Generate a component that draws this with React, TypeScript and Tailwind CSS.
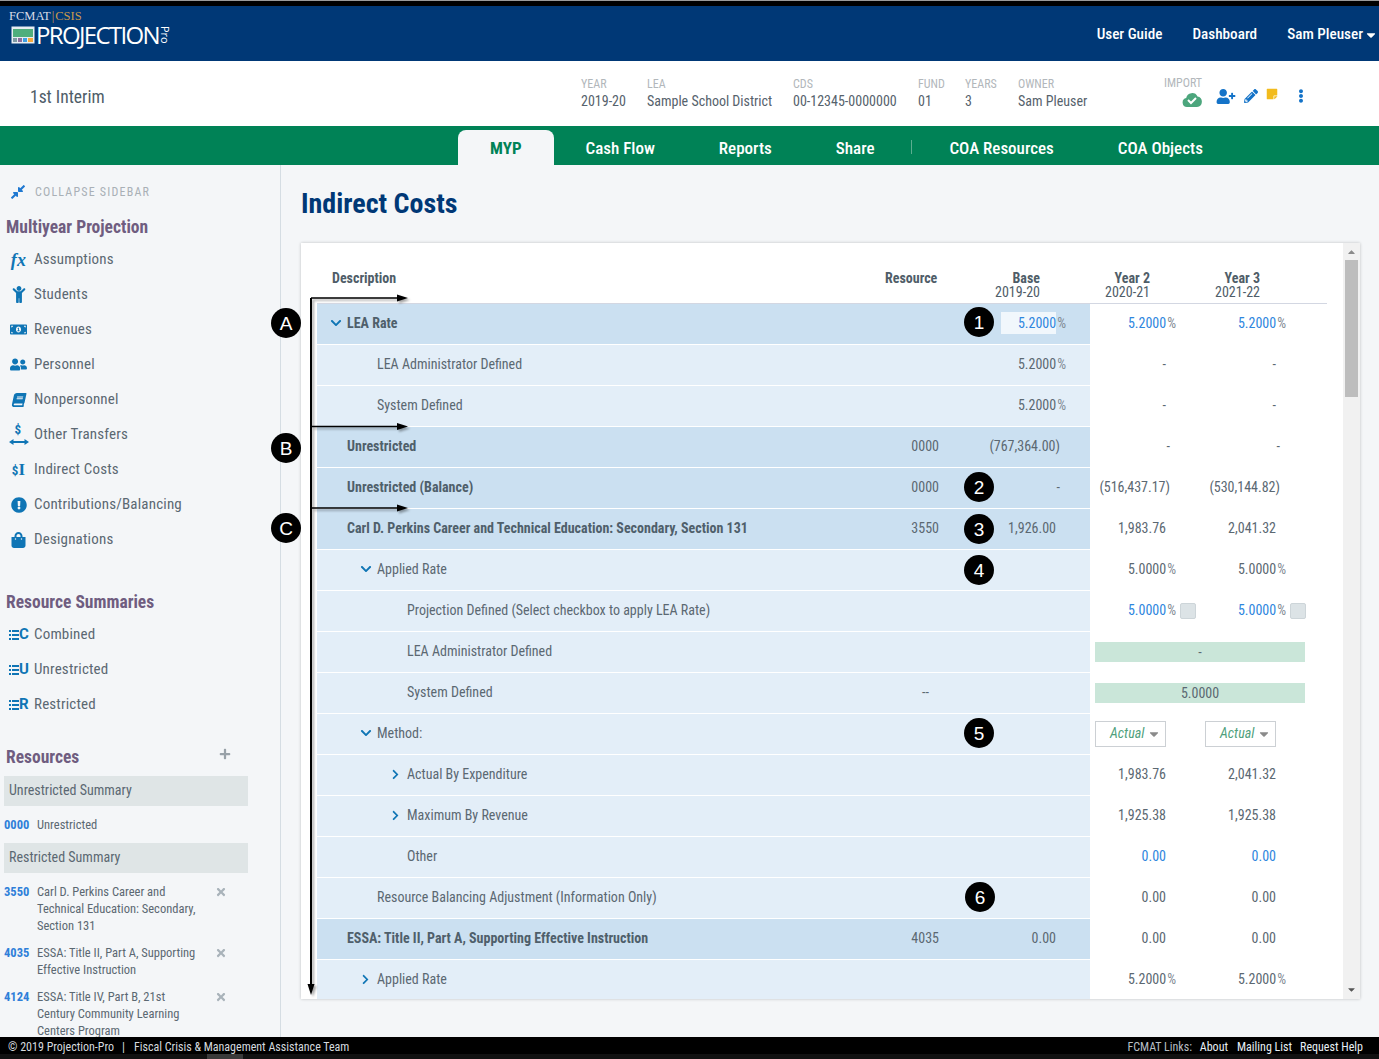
import type { ReactNode } from 'react';
import {
  FaBook, FaCaretDown, FaChevronDown, FaChevronRight, FaChild, FaCompressAlt, FaEllipsisV,
  FaExclamationCircle, FaMoneyBillAlt, FaPencilAlt, FaPlus, FaShoppingBag,
  FaStickyNote, FaTimes, FaUserFriends, FaUserPlus,
} from 'react-icons/fa';

const blue = 'text-[#0f75b5]';

function TransferIcon() {
  return (
    <span className={`relative block w-[20px] h-[20px] ${blue}`}>
      <span className="absolute left-[6px] -top-[3px] text-[13px] font-bold leading-[16px]">$</span>
      <svg viewBox="0 0 20 6" className="absolute left-0 bottom-0 w-[20px] h-[6px]" fill="currentColor">
        <path d="M0 3 4.500 0v2h11V0L20 3l-4.500 3V4h-11v2z" />
      </svg>
    </span>
  );
}

function SummaryIcon({ letter }: { letter: string }) {
  return (
    <span className={`flex items-center ${blue}`}>
      <svg viewBox="0 0 10 10" className="w-[10px] h-[10px]" fill="currentColor">
        <path d="M0 0h2v2H0zM3 0h7v2H3zM0 4h2v2H0zM3 4h7v2H3zM0 8h2v2H0zM3 8h7v2H3z" />
      </svg>
      <span className="text-[15px] [font-stretch:100%] font-bold leading-none">{letter}</span>
    </span>
  );
}

const navItems: { label: string; icon: ReactNode }[] = [
  { label: 'Assumptions', icon: <span className={`font-['Liberation_Serif',serif] italic font-bold text-[18px] leading-none ${blue}`}>fx</span> },
  { label: 'Students', icon: <FaChild className={`w-[16px] h-[17px] ${blue}`} /> },
  { label: 'Revenues', icon: <FaMoneyBillAlt className={`w-[17px] h-[15px] ${blue}`} /> },
  { label: 'Personnel', icon: <FaUserFriends className={`w-[17px] h-[15px] ${blue}`} /> },
  { label: 'Nonpersonnel', icon: <FaBook className={`w-[14px] h-[14px] -skew-x-12 ${blue}`} /> },
  { label: 'Other Transfers', icon: <TransferIcon /> },
  { label: 'Indirect Costs', icon: <span className={`font-bold text-[13px] leading-none ${blue}`}>$<span className="font-['Liberation_Serif',serif] text-[17px] font-bold">I</span></span> },
  { label: 'Contributions/Balancing', icon: <FaExclamationCircle className={`w-[16px] h-[16px] ${blue}`} /> },
  { label: 'Designations', icon: <FaShoppingBag className={`w-[17px] h-[16px] ${blue}`} /> },
];

const summaries = [
  { label: 'Combined', letter: 'C' },
  { label: 'Unrestricted', letter: 'U' },
  { label: 'Restricted', letter: 'R' },
];

const restricted = [
  { code: '3550', text: ['Carl D. Perkins Career and', 'Technical Education: Secondary,', 'Section 131'] },
  { code: '4035', text: ['ESSA: Title II, Part A, Supporting', 'Effective Instruction'] },
  { code: '4124', text: ['ESSA: Title IV, Part B, 21st', 'Century Community Learning', 'Centers Program'] },
];

const metaFields = [
  { label: 'YEAR', value: '2019-20', w: 'w-[66px]' },
  { label: 'LEA', value: 'Sample School District', w: 'w-[146px]' },
  { label: 'CDS', value: '00-12345-0000000', w: 'w-[125px]' },
  { label: 'FUND', value: '01', w: 'w-[47px]' },
  { label: 'YEARS', value: '3', w: 'w-[53px]' },
  { label: 'OWNER', value: 'Sam Pleuser', w: 'w-[146px]' },
];

function Pct({ v, blueText }: { v: string; blueText?: boolean }) {
  return (
    <span className="whitespace-nowrap">
      <span className={blueText ? 'text-[#2e86de]' : ''}>{v}</span>
      <span className="ml-[1px] text-[#7f8a93]">%</span>
    </span>
  );
}

function YearCell({ v, blueText, tight, check }: { v?: string; blueText?: boolean; tight?: boolean; check?: boolean }) {
  if (!v) return <div className="w-[110px]" />;
  if (check) {
    return (
      <div className="w-[110px] flex items-center justify-end pr-[4px]">
        <Pct v={v.replace('%', '')} blueText={blueText} />
        <span className="ml-[4px] w-[16px] h-[16px] rounded-[2px] bg-[#dce3e6] border border-[#cdd5d9]" />
      </div>
    );
  }
  if (v.endsWith('%')) {
    return <div className="w-[110px] text-right pr-[24px]"><Pct v={v.slice(0, -1)} blueText={blueText} /></div>;
  }
  const pad = v.startsWith('(') || tight ? 'pr-[30px]' : 'pr-[34px]';
  return <div className={`w-[110px] text-right ${pad} ${blueText ? 'text-[#2e86de]' : ''}`}>{v}</div>;
}

function ActualSelect() {
  return (
    <div className="w-[110px] pl-[5px]">
      <div className="w-[71px] h-[26px] border border-[#ccd0d4] flex items-center pl-[14px] text-[#4f9f7c] italic">
        Actual
        <FaCaretDown className="ml-[3px] w-[14px] h-[14px] text-[#8b8b8b]" />
      </div>
    </div>
  );
}

type Row = {
  label: string;
  level: number;
  strong?: boolean;
  chevron?: 'down' | 'right';
  res?: string;
  resPad?: boolean;
  base?: string;
  baseInput?: boolean;
  y2?: string;
  y3?: string;
  yBlue?: boolean;
  dashTight?: boolean;
  check?: boolean;
  bar?: string;
  select?: boolean;
};

const rows: Row[] = [
  { label: 'LEA Rate', level: 0, strong: true, chevron: 'down', baseInput: true, base: '5.2000', y2: '5.2000%', y3: '5.2000%', yBlue: true },
  { label: 'LEA Administrator Defined', level: 1, base: '5.2000%', y2: '-', y3: '-' },
  { label: 'System Defined', level: 1, base: '5.2000%', y2: '-', y3: '-' },
  { label: 'Unrestricted', level: 0, strong: true, res: '0000', base: '(767,364.00)', y2: '-', y3: '-', dashTight: true },
  { label: 'Unrestricted (Balance)', level: 0, strong: true, res: '0000', base: '-', y2: '(516,437.17)', y3: '(530,144.82)' },
  { label: 'Carl D. Perkins Career and Technical Education: Secondary, Section 131', level: 0, strong: true, res: '3550', base: '1,926.00', y2: '1,983.76', y3: '2,041.32' },
  { label: 'Applied Rate', level: 1, chevron: 'down', y2: '5.0000%', y3: '5.0000%' },
  { label: 'Projection Defined (Select checkbox to apply LEA Rate)', level: 2, y2: '5.0000%', y3: '5.0000%', yBlue: true, check: true },
  { label: 'LEA Administrator Defined', level: 2, bar: '-' },
  { label: 'System Defined', level: 2, res: '--', resPad: true, bar: '5.0000' },
  { label: 'Method:', level: 1, chevron: 'down', select: true },
  { label: 'Actual By Expenditure', level: 2, chevron: 'right', y2: '1,983.76', y3: '2,041.32' },
  { label: 'Maximum By Revenue', level: 2, chevron: 'right', y2: '1,925.38', y3: '1,925.38' },
  { label: 'Other', level: 2, y2: '0.00', y3: '0.00', yBlue: true },
  { label: 'Resource Balancing Adjustment (Information Only)', level: 1, y2: '0.00', y3: '0.00' },
  { label: 'ESSA: Title II, Part A, Supporting Effective Instruction', level: 0, strong: true, res: '4035', base: '0.00', y2: '0.00', y3: '0.00' },
  { label: 'Applied Rate', level: 1, chevron: 'right', y2: '5.2000%', y3: '5.2000%' },
];

const levelPad = ['pl-[13px]', 'pl-[43px]', 'pl-[73px]'];

function BaseCell({ row }: { row: Row }) {
  if (row.baseInput) {
    return (
      <div className="w-[150px] flex justify-end items-center pr-[24px]">
        <span className="w-[55px] h-[22px] leading-[22px] bg-[#f1f7fc] text-right text-[#2e86de]">{row.base}</span>
        <span className="ml-[1px] text-[#7f8a93]">%</span>
      </div>
    );
  }
  if (!row.base) return <div className="w-[150px]" />;
  if (row.base.endsWith('%')) {
    return <div className="w-[150px] text-right pr-[24px]"><Pct v={row.base.slice(0, -1)} /></div>;
  }
  const pad = row.base.startsWith('(') || row.base === '-' ? 'pr-[30px]' : 'pr-[34px]';
  return <div className={`w-[150px] text-right ${pad}`}>{row.base}</div>;
}

function TableRow({ row }: { row: Row }) {
  return (
    <div className="flex h-[41px] items-stretch shrink-0">
      <div className={`w-[773px] flex items-center border-b border-white pb-[2px] ${row.strong ? 'bg-[#cbe0f1]' : 'bg-[#e3eef8]'} ${levelPad[row.level]}`}>
        <span className="w-[17px] shrink-0">
          {row.chevron === 'down' && <FaChevronDown className="w-[12px] h-[12px] text-[#0f75b5]" />}
          {row.chevron === 'right' && <FaChevronRight className="w-[11px] h-[11px] text-[#0f75b5]" />}
        </span>
        <span className={`flex-1 whitespace-nowrap ${row.strong ? 'font-bold text-[#4f5f6b]' : ''}`}>{row.label}</span>
        <span className={`w-[60px] text-right ${row.resPad ? 'pr-[11px]' : 'pr-[1px]'}`}>{row.res}</span>
        <BaseCell row={row} />
      </div>
      <div className="w-[237px] flex items-center pb-[2px]">
        {row.bar ? (
          <div className="ml-[5px] w-[210px] h-[20px] leading-[20px] bg-[#cae6d9] text-center">{row.bar}</div>
        ) : row.select ? (
          <>
            <ActualSelect />
            <ActualSelect />
          </>
        ) : (
          <>
            <YearCell v={row.y2} blueText={row.yBlue} tight={row.dashTight} check={row.check} />
            <YearCell v={row.y3} blueText={row.yBlue} tight={row.dashTight} check={row.check} />
          </>
        )}
      </div>
    </div>
  );
}

function Sidebar() {
  return (
    <aside className="w-[281px] shrink-0 border-r border-[#d5dde3] bg-[#f4f6f8] overflow-hidden">
      <div className="h-[52px] flex items-center pl-[10px] pt-[1px]">
        <FaCompressAlt className="w-[16px] h-[16px] text-[#1f78d1]" />
        <span className="ml-[9px] text-[12px] tracking-[1.2px] text-[#a9b0b6]">COLLAPSE SIDEBAR</span>
      </div>
      <h3 className="pl-[6px] text-[17.500px] leading-[20px] font-bold text-[#6f5d80]">Multiyear Projection</h3>
      <ul className="mt-[5px]">
        {navItems.map(item => (
          <li key={item.label} className="h-[35px] flex items-center text-[15px] tracking-[0.18px]">
            <span className="w-[34px] flex justify-center pl-[3px] shrink-0">{item.icon}</span>
            {item.label}
          </li>
        ))}
      </ul>
      <h3 className="mt-[35px] pl-[6px] text-[17.500px] leading-[20px] font-bold text-[#6f5d80]">Resource Summaries</h3>
      <ul className="mt-[5px]">
        {summaries.map(s => (
          <li key={s.label} className="h-[35px] flex items-center text-[15px] tracking-[0.18px]">
            <span className="w-[34px] pl-[9px] shrink-0"><SummaryIcon letter={s.letter} /></span>
            {s.label}
          </li>
        ))}
      </ul>
      <div className="mt-[25px] w-[248px] h-[20px] flex justify-between items-center">
        <h3 className="pl-[6px] text-[17.500px] leading-[20px] font-bold text-[#6f5d80]">Resources</h3>
        <FaPlus className="mr-[17px] -mt-[6px] w-[12px] h-[12px] text-[#98a1a8]" />
      </div>
      <div className="mt-[9px] ml-[4px] w-[244px] h-[30px] leading-[29px] pl-[5px] bg-[#dfe5e6] text-[14px]">Unrestricted Summary</div>
      <div className="h-[37px] pt-[1px] flex items-center pl-[4px] text-[12.500px]">
        <span className="w-[33px] font-bold text-[#2e7fd9]">0000</span>Unrestricted
      </div>
      <div className="ml-[4px] w-[244px] h-[30px] leading-[29px] pl-[5px] bg-[#dfe5e6] text-[14px]">Restricted Summary</div>
      <ul className="mt-[10px]">
        {restricted.map(r => (
          <li key={r.code} className="flex pl-[4px] pb-[10px] text-[12.500px] leading-[17px]">
            <span className="w-[33px] shrink-0 font-bold text-[#2e7fd9]">{r.code}</span>
            <span className="w-[178px] whitespace-nowrap">
              {r.text.map(t => <span key={t} className="block">{t}</span>)}
            </span>
            <FaTimes className="mt-[3px] w-[12px] h-[12px] text-[#a9b3ba]" />
          </li>
        ))}
      </ul>
    </aside>
  );
}

function Arrows() {
  return (
    <svg className="absolute left-[305px] top-[290px] w-[110px] h-[710px] [filter:drop-shadow(2px_2px_1px_rgba(0,0,0,0.35))]" viewBox="0 0 110 710">
      <path d="M6 8V698" stroke="#000" strokeWidth="2" fill="none" />
      <path d="M6 8H96M6 136.500H96M6 218H96" stroke="#000" strokeWidth="1.500" fill="none" />
      <path d="M92 4.500 103 8 92 11.500zM92 133 103 136.500 92 140zM92 214.500 103 218 92 221.500zM2.500 694 6 705 9.500 694z" fill="#000" />
    </svg>
  );
}

const badges = [
  { t: 'A', c: 'left-[271px] top-[308px]' },
  { t: 'B', c: 'left-[271px] top-[433px]' },
  { t: 'C', c: 'left-[271px] top-[513px]' },
  { t: '1', c: 'left-[964px] top-[307px]' },
  { t: '2', c: 'left-[964px] top-[472px]' },
  { t: '3', c: 'left-[964px] top-[514px]' },
  { t: '4', c: 'left-[964px] top-[555px]' },
  { t: '5', c: 'left-[964px] top-[718px]' },
  { t: '6', c: 'left-[965px] top-[882px]' },
];

export default function App() {
  return (
    <div className="relative h-[1059px] flex flex-col overflow-hidden bg-[#f4f6f8] font-['Roboto',sans-serif] [font-stretch:75%] text-[14px] text-[#5b6872]">
      <div className="h-[6px] shrink-0 bg-black border-t border-[#9a9a9a]" />

      <header className="h-[55px] shrink-0 bg-[#003876] flex justify-between text-white">
        <div className="pl-[9px] pt-[4px]">
          <div className="font-['Liberation_Serif',serif] text-[12.500px] leading-[12px] text-[#d8dde6]">
            FCMAT<span className="mx-[1px] text-[#c99a4c]">|</span><span className="text-[#c99a4c]">CSIS</span>
          </div>
          <div className="flex items-center h-[24px] mt-[1px] pl-[2px]">
            <svg viewBox="0 0 24 19" className="w-[24px] h-[19px]">
              <rect x="0.500" y="0.500" width="23" height="17" fill="#e8eef2" />
              <rect x="2" y="3" width="20" height="8" fill="#4fae7c" />
              <rect x="2" y="12" width="4" height="4" fill="#7e9aa4" />
              <rect x="7" y="12" width="4" height="4" fill="#8c6f9c" />
              <rect x="12" y="12" width="4" height="4" fill="#3f9fe0" />
              <rect x="17" y="12" width="5" height="4" fill="#f5a93c" />
            </svg>
            <span className="ml-[1px] font-['Open_Sans',sans-serif] [font-stretch:100%] font-normal text-[24px] leading-none tracking-[-1.650px]">PROJECTION</span>
            <span className="ml-[1px] font-['Open_Sans',sans-serif] [font-stretch:100%] [writing-mode:vertical-rl] text-[11px] leading-[11px]">Pro</span>
          </div>
        </div>
        <nav className="flex items-center pr-[1px] pt-[2px] text-[15.200px] font-medium">
          <span>User Guide</span>
          <span className="ml-[30px]">Dashboard</span>
          <span className="ml-[30px]">Sam Pleuser</span>
          <FaCaretDown className="ml-[1px] w-[14px] h-[14px]" />
        </nav>
      </header>

      <div className="h-[65px] shrink-0 bg-white flex items-center">
        <div className="w-[581px] pl-[30px] pt-[7px] text-[17.500px] text-[#4f5d68]">1st Interim</div>
        {metaFields.map(f => (
          <div key={f.label} className={`${f.w} shrink-0 pb-[1px]`}>
            <div className="text-[12px] leading-[16px] text-[#b2b7bb]">{f.label}</div>
            <div className="text-[14px] leading-[18px] text-[#56626c]">{f.value}</div>
          </div>
        ))}
        <div className="w-[52px] shrink-0 -mt-[5px]">
          <div className="text-[12px] leading-[14px] text-[#b2b7bb]">IMPORT</div>
          <svg viewBox="0 0 20 15" className="mt-[2px] ml-[18px] w-[20px] h-[15px]">
            <path d="M5 15a4.500 4.500 0 0 1-.8-8.900A6 6 0 0 1 15.500 4.500 5.300 5.300 0 0 1 15 15z" fill="#4ca67d" />
            <path d="m6 8 3 3 5-5" stroke="#fff" strokeWidth="2" fill="none" />
          </svg>
        </div>
        <FaUserPlus className="w-[20px] h-[15px] text-[#1473c8] mt-[5px]" />
        <FaPencilAlt className="ml-[8px] w-[14px] h-[14px] text-[#1473c8] mt-[5px]" />
        <FaStickyNote className="ml-[8px] w-[12px] h-[12px] text-[#f2bb1d]" />
        <FaEllipsisV className="ml-[18px] w-[10px] h-[14px] text-[#1473c8] mt-[5px]" />
      </div>

      <nav className="h-[39px] shrink-0 bg-[#008256] flex items-end pl-[458px] text-white text-[17px] font-medium">
        <span className="h-[35px] px-[32px] leading-[37px] rounded-t-[8px] bg-[#f4f6f8] font-bold text-[#008256]">MYP</span>
        {['Cash Flow', 'Reports', 'Share'].map(t => (
          <span key={t} className="h-[35px] px-[32px] leading-[37px]">{t}</span>
        ))}
        <span className="ml-[5px] mb-[11px] w-px h-[14px] bg-[#5cae90]" />
        <span className="ml-[5px] h-[35px] px-[32px] leading-[37px]">COA Resources</span>
        <span className="h-[35px] px-[32px] leading-[37px]">COA Objects</span>
      </nav>

      <div className="flex-1 min-h-0 flex">
        <Sidebar />
        <main className="flex-1 pl-[20px] pr-[19px]">
          <h1 className="h-[78px] pt-[21px] text-[28px] leading-[36px] font-bold text-[#003876]">Indirect Costs</h1>
          <div className="h-[756px] flex bg-white shadow-[0_0_3px_rgba(0,0,0,0.22)] overflow-hidden">
            <div className="flex-1 pl-[16px] overflow-hidden">
              <div className="w-[1010px] h-[61px] flex items-end border-b border-[#d3d7e2] pb-[4px] text-[#4f5d68]">
                <div className="w-[15px]" />
                <div className="w-[553px] mb-[14px] leading-[14px] font-bold">Description</div>
                <div className="w-[55px] mb-[14px] leading-[14px] font-bold">Resource</div>
                <div className="w-[100px] text-right leading-[14px]"><div className="font-bold">Base</div>2019-20</div>
                <div className="w-[110px] text-right leading-[14px]"><div className="font-bold">Year 2</div>2020-21</div>
                <div className="w-[110px] text-right leading-[14px]"><div className="font-bold">Year 3</div>2021-22</div>
              </div>
              {rows.map((r, i) => <TableRow key={i} row={r} />)}
            </div>
            <div className="w-[17px] shrink-0 bg-[#f1f1f1] flex flex-col items-center text-[#8a8a8a]">
              <FaCaretDown className="mt-[4px] w-[11px] h-[11px] rotate-180" />
              <div className="mt-[2px] w-[13px] h-[137px] bg-[#bdbdbd]" />
              <FaCaretDown className="mt-auto mb-[4px] w-[11px] h-[11px] text-[#555]" />
            </div>
          </div>
        </main>
      </div>

      <footer className="h-[22px] shrink-0 bg-black text-[12px]">
        <div className="h-[17px] pt-[3px] pl-[8px] pr-[16px] flex justify-between items-center leading-[14px] text-[#d5dadf]">
          <span className="flex">
            <span>© 2019 Projection-Pro</span>
            <span className="ml-[8px]">|</span>
            <span className="ml-[9px]">Fiscal Crisis &amp; Management Assistance Team</span>
          </span>
          <span className="text-[#b8bec4]">FCMAT Links: <span className="ml-[5px] text-[#e8f0f6]">About</span><span className="ml-[9px] text-[#e8f0f6]">Mailing List</span><span className="ml-[8px] text-[#e8f0f6]">Request Help</span></span>
        </div>
        <div className="h-[5px] bg-[#111]"><div className="ml-[207px] w-[36px] h-[5px] bg-[#3a3a3a]" /></div>
      </footer>

      <Arrows />
      {badges.map(b => (
        <span key={b.t} className={`absolute ${b.c} w-[30px] h-[30px] rounded-full bg-black text-white flex items-center justify-center font-['Liberation_Sans',sans-serif] text-[19px] leading-none`}>{b.t}</span>
      ))}
    </div>
  );
}
